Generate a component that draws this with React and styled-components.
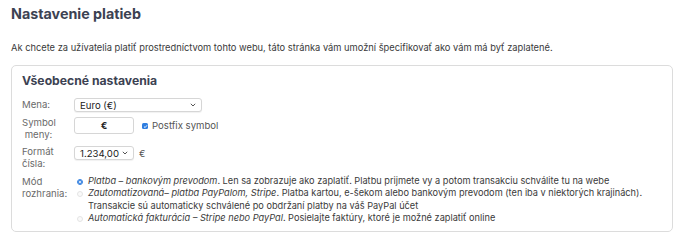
import React from 'react';
import styled, { createGlobalStyle } from 'styled-components';

const GlobalStyle = createGlobalStyle`
  body {
    margin: 0;
    background: #fff;
    font-family: Inter, "Liberation Sans", sans-serif;
    color: #333;
  }
`;

const Page = styled.div`
  padding: 3px 9px 0 11px;
`;

const Title = styled.h1`
  margin: 0;
  font-size: 14.3px;
  line-height: 22px;
  font-weight: 700;
  color: #3c4252;
`;

const Intro = styled.p`
  margin: 17px 0 0;
  font-size: 9.3px;
  line-height: 12px;
  color: #3a3a3a;
`;

const Card = styled.section`
  margin-top: 11px;
  border: 1px solid #dcdcdc;
  border-radius: 5px;
  padding: 6px 10px 9px 10px;
  height: 167px;
  box-sizing: border-box;
`;

const CardTitle = styled.h2`
  margin: 0 0 8px;
  font-size: 12.2px;
  line-height: 18px;
  font-weight: 700;
  color: #3c4252;
`;

const Form = styled.div`
  display: grid;
  grid-template-columns: 52px 1fr;
  align-items: start;
`;

const Label = styled.div`
  font-size: 9.6px;
  line-height: 12px;
  color: #6a6a6a;
  padding-top: ${(p) => p.$top || 0}px;
  margin-bottom: ${(p) => p.$gap || 0}px;
`;

const Field = styled.div`
  display: flex;
  align-items: center;
  gap: ${(p) => p.$gap || 5}px;
  margin-bottom: ${(p) => p.$mb || 0}px;
`;

const Select = styled.div`
  box-sizing: border-box;
  width: ${(p) => p.$w}px;
  height: 14px;
  border: 1px solid #d6d6d6;
  border-radius: 3px;
  background: #fff;
  box-shadow: 0 1px 1px rgba(0, 0, 0, 0.06);
  display: flex;
  align-items: center;
  justify-content: space-between;
  padding: 0 5px 0 5px;
  font-size: 9.6px;
  color: #222;
`;

const Chevron = () => (
  <svg width="6" height="4" viewBox="0 0 6 4">
    <path d="M0.8 0.8 L3 3 L5.2 0.8" fill="none" stroke="#555" strokeWidth="1" />
  </svg>
);

const TextInput = styled.div`
  box-sizing: border-box;
  width: 60px;
  height: 17px;
  border: 1px solid #d6d6d6;
  border-radius: 3px;
  display: flex;
  align-items: center;
  justify-content: center;
  font-size: 9.6px;
  font-weight: 700;
  color: #222;
`;

const Check = styled.span`
  width: 6px;
  height: 6px;
  border-radius: 1.5px;
  background: #2f7ee0;
  display: inline-flex;
  align-items: center;
  justify-content: center;
  margin-left: 4px;
  margin-top: 1px;
`;

const Inline = styled.span`
  font-size: 9.6px;
  color: #555;
`;

const Options = styled.div`
  display: flex;
  flex-direction: column;
`;

const Option = styled.div`
  display: flex;
  align-items: flex-start;
  font-size: 9.2px;
  line-height: 12.3px;
  color: #3a3a3a;
`;

const Radio = styled.span`
  flex: none;
  box-sizing: border-box;
  width: 6px;
  height: 6px;
  border-radius: 50%;
  margin: 4px 5px 0 3px;
  border: ${(p) => (p.$on ? '1.5px solid #2f7ee0' : '1px solid #e4e4e4')};
  background: ${(p) => (p.$on ? '#fff' : '#fafafa')};
  box-shadow: ${(p) => (p.$on ? 'inset 0 0 0 1px #2f7ee0' : 'none')};
`;

const Em = styled.em`
  font-style: italic;
`;

export default function App() {
  return (
    <>
      <GlobalStyle />
      <Page>
        <Title>Nastavenie platieb</Title>
        <Intro>
          Ak chcete za užívatelia platiť prostredníctvom tohto webu, táto stránka vám umožní
          špecifikovať ako vám má byť zaplatené.
        </Intro>
        <Card>
          <CardTitle>Všeobecné nastavenia</CardTitle>
          <Form>
            <Label $top={1} $gap={5}>Mena:</Label>
            <Field $mb={5}>
              <Select $w={128}>
                <span>Euro (€)</span>
                <Chevron />
              </Select>
            </Field>

            <Label $gap={5}>
              Symbol
              <br />
              &nbsp;meny:
            </Label>
            <Field $mb={5} $gap={4}>
              <TextInput>€</TextInput>
              <Check>
                <svg width="5" height="5" viewBox="0 0 5 5">
                  <path d="M1 2.6 L2.1 3.6 L4 1.3" fill="none" stroke="#fff" strokeWidth="0.9" />
                </svg>
              </Check>
              <Inline>Postfix symbol</Inline>
            </Field>

            <Label $gap={5}>
              Formát
              <br />
              čísla:
            </Label>
            <Field $mb={5} $gap={5}>
              <Select $w={60}>
                <span>1.234,00</span>
                <Chevron />
              </Select>
              <Inline>€</Inline>
            </Field>

            <Label $top={1}>
              Mód
              <br />
              rozhrania:
            </Label>
            <Options>
              <Option>
                <Radio $on />
                <span>
                  <Em>Platba – bankovým prevodom</Em>. Len sa zobrazuje ako zaplatiť. Platbu prijmete
                  vy a potom transakciu schválite tu na webe
                </span>
              </Option>
              <Option>
                <Radio />
                <span>
                  <Em>Zautomatizovaná– platba PayPalom, Stripe</Em>. Platba kartou, e-šekom alebo
                  bankovým prevodom (ten iba v niektorých krajinách).
                  <br />
                  Transakcie sú automaticky schválené po obdržaní platby na váš PayPal účet
                </span>
              </Option>
              <Option>
                <Radio />
                <span>
                  <Em>Automatická fakturácia – Stripe nebo PayPal</Em>. Posielajte faktúry, ktoré je
                  možné zaplatiť online
                </span>
              </Option>
            </Options>
          </Form>
        </Card>
      </Page>
    </>
  );
}
